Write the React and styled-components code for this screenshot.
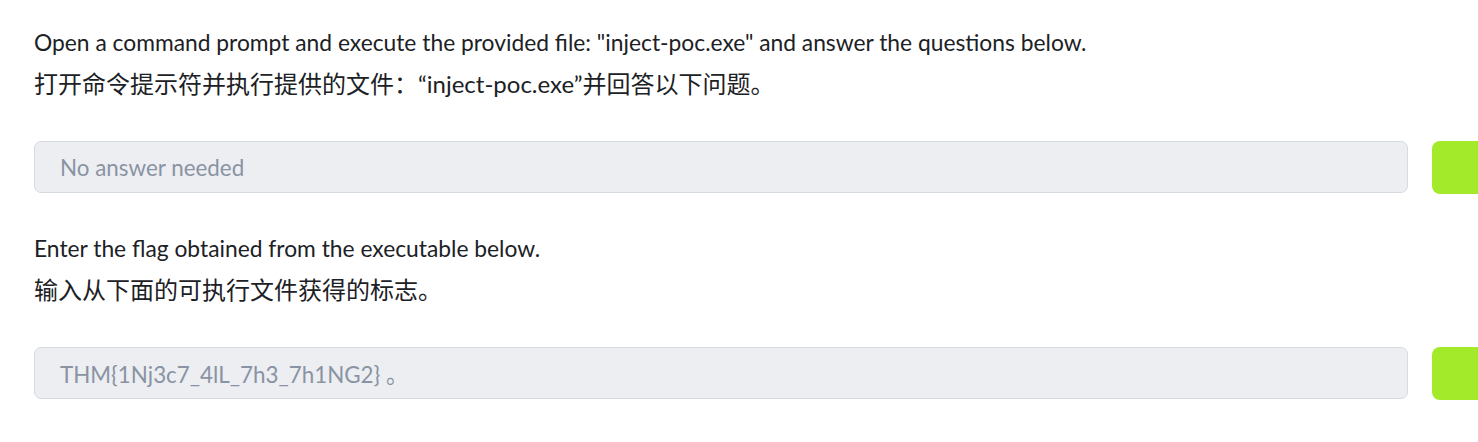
import styled, { createGlobalStyle } from "styled-components";

const GlobalStyle = createGlobalStyle`
  body {
    margin: 0;
    background: #ffffff;
    font-family: Lato, "Noto Sans CJK SC", sans-serif;
    color: #1c2125;
    overflow: hidden;
  }
`;

const Page = styled.div`
  padding: 26px 0 0 34px;
  width: 1478px;
  box-sizing: border-box;
`;

const Question = styled.div`
  margin-bottom: 38px;
`;

const Text = styled.p`
  margin: 0;
  font-size: ${(p) => (p.$cjk ? "24px" : "22.8px")};
  line-height: ${(p) => (p.$cjk ? "34px" : "32px")};
  margin-top: ${(p) => (p.$cjk ? "9px" : "0")};
  margin-bottom: ${(p) => (p.$cjk ? "40px" : "0")};
`;

const Row = styled.div`
  display: flex;
  align-items: flex-start;
  gap: 24px;
`;

const Field = styled.div`
  flex: 0 0 1374px;
  height: 52px;
  box-sizing: border-box;
  background: #eceef2;
  border: 1px solid #d6dae1;
  border-radius: 7px;
  display: flex;
  align-items: center;
  padding-left: 25px;
  font-size: 22.4px;
  color: #8a93a3;
`;

const Submit = styled.button`
  flex: 0 0 80px;
  height: 53px;
  border: none;
  border-radius: 8px;
  background: #a3ea2a;
`;

const items = [
  {
    en: 'Open a command prompt and execute the provided file: "inject-poc.exe" and answer the questions below.',
    zh: "打开命令提示符并执行提供的文件：“inject-poc.exe”并回答以下问题。",
    value: "No answer needed",
  },
  {
    en: "Enter the flag obtained from the executable below.",
    zh: "输入从下面的可执行文件获得的标志。",
    value: "THM{1Nj3c7_4lL_7h3_7h1NG2} 。",
  },
];

export default function App() {
  return (
    <Page>
      <GlobalStyle />
      {items.map((q) => (
        <Question key={q.en}>
          <Text>{q.en}</Text>
          <Text $cjk>{q.zh}</Text>
          <Row>
            <Field>{q.value}</Field>
            <Submit />
          </Row>
        </Question>
      ))}
    </Page>
  );
}
